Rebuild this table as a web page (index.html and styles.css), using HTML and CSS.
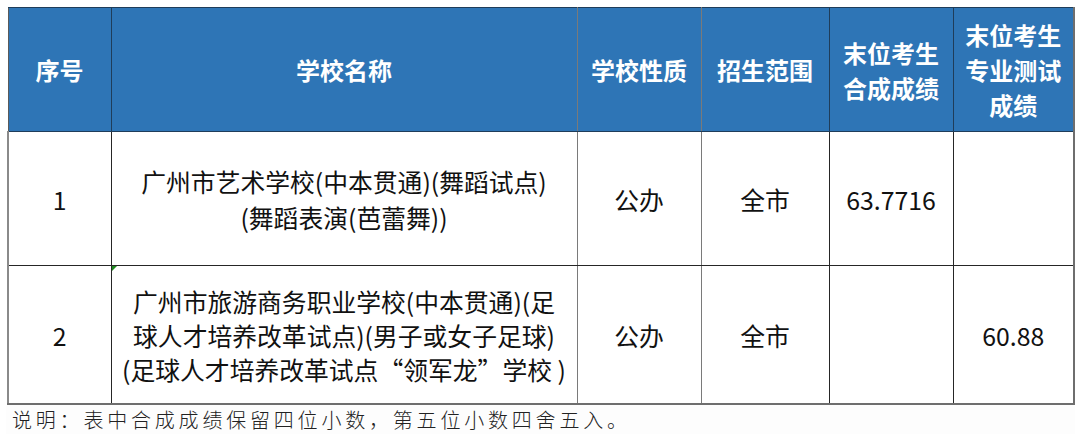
FILE: index.html
```html
<!DOCTYPE html>
<html lang="zh-CN">
<head>
<meta charset="utf-8">
<link rel="stylesheet" href="styles.css">
</head>
<body>
<div class="page">
  <table class="grid">
    <colgroup>
      <col class="c1"><col class="c2"><col class="c3"><col class="c4"><col class="c5"><col class="c6">
    </colgroup>
    <thead>
      <tr class="head">
        <th>序号</th>
        <th class="gl">学校名称</th>
        <th class="gl">学校性质</th>
        <th>招生范围</th>
        <th>末位考生<br>合成成绩</th>
        <th>末位考生<br>专业测试<br>成绩</th>
      </tr>
    </thead>
    <tbody>
      <tr class="r1">
        <td>1</td>
        <td class="gl">广州市艺术学校(中本贯通)(舞蹈试点)<br>(舞蹈表演(芭蕾舞))</td>
        <td class="gl">公办</td>
        <td>全市</td>
        <td>63.7716</td>
        <td></td>
      </tr>
      <tr class="r2">
        <td>2</td>
        <td class="gl mark">广州市旅游商务职业学校(中本贯通)(足<br>球人才培养改革试点)(男子或女子足球)<br>(足球人才培养改革试点“领军龙”学校 )</td>
        <td class="gl">公办</td>
        <td>全市</td>
        <td></td>
        <td>60.88</td>
      </tr>
    </tbody>
  </table>
  <div class="note">说明：表中合成成绩保留四位小数，第五位小数四舍五入。</div>
</div>
</body>
</html>
```
FILE: styles.css
```css
html, body {
  margin: 0;
  padding: 0;
  background: #ffffff;
}
.page {
  padding: 7px 0 0 7px;
  width: 1066px;
}
.grid {
  border-collapse: collapse;
  table-layout: fixed;
  width: 1066px;
  font-family: "Noto Sans CJK SC", "Noto Sans", sans-serif;
}
.c1 { width: 103px; }
.c2 { width: 466px; }
.c3 { width: 124px; }
.c4 { width: 128px; }
.c5 { width: 124px; }
.c6 { width: 121px; }
.grid th, .grid td {
  border: 1px solid #262626;
  text-align: center;
  vertical-align: middle;
  padding: 0;
}
.grid .gl {
  border-right-color: #7a7a7a;
}
.grid tr > :last-child {
  border-right: 2px solid #6e6e6e;
}
.head th {
  background: #2e75b6;
  color: #ffffff;
  font-weight: 700;
  font-size: 24px;
  line-height: 35px;
  height: 123px;
  border-color: #1f3d5a;
}
.head th:first-child { border-left-color: #5a5a5a; }
.grid td {
  color: #111111;
  font-size: 24.8px;
  font-weight: 400;
}
.r1 td {
  height: 133px;
  line-height: 36px;
}
.r2 td {
  height: 137px;
  line-height: 34px;
  border-bottom: 2px solid #6e6e6e;
}
.grid td:first-child { border-left: 2px solid #8a8a8a; }
.mark {
  position: relative;
}
.mark::before {
  content: "";
  position: absolute;
  left: 0;
  top: 0;
  width: 0;
  height: 0;
  border-top: 5px solid #1f8a1f;
  border-right: 5px solid transparent;
}
.note {
  width: 1062px;
  height: 29px;
  padding-left: 5px;
  font-family: "Noto Sans CJK SC", sans-serif;
  font-size: 20px;
  font-weight: 300;
  letter-spacing: 3.8px;
  line-height: 29px;
  color: #222222;
  background: #fdfdfd;
  box-shadow: 0 1px 1px #f0f0f0;
}
```
